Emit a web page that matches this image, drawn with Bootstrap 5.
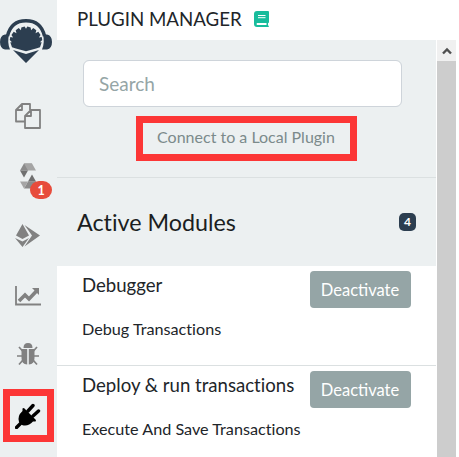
<!DOCTYPE html>
<html lang="en">
<head>
<meta charset="utf-8">
<meta name="viewport" content="width=device-width, initial-scale=1">
<title>Plugin Manager</title>
<link href="https://cdn.jsdelivr.net/npm/bootstrap@5.3.0/dist/css/bootstrap.min.css" rel="stylesheet">
<style>
body{font-family:Lato,"Open Sans",sans-serif;color:#212529;height:457px;line-height:1.2;font-variant-ligatures:none}
.app{width:459px;height:457px}
.icon-bar{width:57px;background:#ecf0f1;color:#818181}
.brand{height:86px;padding-top:19px;color:#2c3e50}
.slot{width:55px;height:60px}
.slot svg{display:block}
.hl{border:7px solid #fc3636}
.slot .hl{width:51px;height:53px;margin:0 0 1px 3px;padding-right:1px;color:#000}
.count{left:30px;top:35px;width:22px;height:18px;border-radius:9px;background:#e74c3c;font-size:12.5px;line-height:19px}
.title-bar{height:40px;padding:0 0 2px 20px}
.title-bar h1{font-size:18.7px}
.search-area{height:138px;padding:20px 34px 0 26px;border-bottom:1px solid #dbe0e1}
.pane{background:#ecf0f1;width:379px}
.search-area .form-control{height:47px;font-size:19px;border-color:#ced4da;border-radius:6px;padding:0 15px 1px}
.search-area .form-control::placeholder{color:#95a5a6}
.link-box{width:221px;height:45px;margin:9px 0 0 53px;padding:0 1px 4px 0;color:#7b8a8b;font-size:16px}
.section-head{height:88px;padding:0 20px}
.section-head h2{font-size:23.3px;color:#1b1e21;padding-top:2px}
.total{width:17px;height:18px;border-radius:5px;background:#2c3e50;font-size:12px;line-height:18px}
.module{height:100px;padding:5px 25px 0;background:#fff;border-bottom:1px solid #dbe0e1}
.module h3{font-size:18.6px;margin-top:3px;line-height:23px}
.module p{font-size:16.2px;line-height:20px;margin-top:11px}
.btn-off{background:#95a5a6;color:#fff;width:101px;height:37px;border-radius:4px;font-size:16.5px;padding:2px 1px 0 0}
.scroller{width:19px;margin-left:1px;background:#cdcdcd}
.scroll-up{height:21px;background:#f0f0f0;color:#505050}
</style>
<script defer src="https://cdn.jsdelivr.net/npm/bootstrap@5.3.0/dist/js/bootstrap.bundle.min.js"></script>
</head>
<body class="bg-white overflow-hidden">
<div class="app d-flex overflow-hidden">
  <nav class="icon-bar flex-shrink-0 d-flex flex-column">
    <div class="brand flex-shrink-0">
      <svg class="d-block" width="52" height="44" viewBox="0 0 52 44"><path d="M7.500 17C10 6 17 1.700 26 1.700S42 6 44.500 17" fill="none" stroke="currentColor" stroke-width="3.400"/><path d="M9 15.500H5q-5 1-5 7.500t5 7.500h5q-3-7-1-15zM43 15.500h4q5 1 5 7.500t-5 7.500h-5q3-7 1-15z" fill="currentColor"/><path d="M13 31l13 4 13-4-13 13z" fill="currentColor"/><path transform="translate(26 19) scale(1.12 1.04) translate(-26 -19)" d="M13.500 28l-1.500-5h1.500l-2-2 .5-3 2.500.5-1.500-2.500 2-3 2.500 1.500-.7-3 2.700-2 2 2 .3-2.500 3-1 1.200 2 1.200-2 3 1 .3 2.500 2-2 2.700 2-.7 3 2.500-1.500 2 3-1.500 2.500 2.500-.5.500 3-2 2H40l-1.500 5-3.500 1.200-9 2.500-9-2.500z" fill="currentColor"/></svg>
    </div>
    <div class="slot d-flex justify-content-center align-items-center flex-shrink-0">
      <svg width="26" height="26" viewBox="0 0 26 26" fill="none" stroke="currentColor" stroke-width="1.800" stroke-linejoin="round"><path d="M9.500 18.500H1V7L7 1h8v6M7 1v6H1M16 7h9v18H10V13l6-6zM16 7v6h-6"/></svg>
    </div>
    <div class="slot position-relative d-flex justify-content-center align-items-center flex-shrink-0">
      <svg width="16" height="26" viewBox="0 0 16 26"><path d="M4 .5h8L8 7.500H0z" fill="#8b8b8b"/><path d="M4 .5h8l4 7H8z" fill="#a5a5a5"/><path d="M0 7.500h8l-4 7z" fill="#707070"/><path d="M12 25.500H4l4-7h8z" fill="#8b8b8b"/><path d="M4 25.500l-4-7h8z" fill="#a5a5a5"/><path d="M16 18.500H8l4-7z" fill="#707070"/></svg>
      <span class="count position-absolute text-white text-center fw-bold">1</span>
    </div>
    <div class="slot d-flex justify-content-center align-items-center flex-shrink-0">
      <svg width="26" height="24" viewBox="0 0 26 24" fill="currentColor"><path d="M7.500 0L14 11.500 7.500 15 1 11.500zM0 14l7.500 3.500L14 14 7.500 23z"/><path d="M9.500 1L25 11.500 9.500 22.500l7.500-11z"/></svg>
    </div>
    <div class="slot d-flex justify-content-center align-items-center flex-shrink-0">
      <svg width="26" height="20" viewBox="0 0 26 20" fill="none" stroke="currentColor"><path d="M1 0v18.500h25" stroke-width="1.800"/><path d="M4 15l6-6 4 4 7.500-8" stroke-width="3.600"/><path d="M17 2h7v7z" fill="currentColor" stroke="none"/></svg>
    </div>
    <div class="slot d-flex justify-content-center align-items-center flex-shrink-0">
      <svg class="mb-1" width="24" height="24" viewBox="0 0 24 24" fill="currentColor"><path d="M7.500 6q0-5 4.500-5t4.500 5zM5.500 7h5.700v15.500Q5.500 22 5.500 16zM18.500 7h-5.700v15.500q5.700-.5 5.700-6.500z"/><path d="M7 9.500L3 5M6 14H1M7 18l-4 4.500M17 9.500L21 5M18 14h5M17 18l4 4.500" fill="none" stroke="currentColor" stroke-width="1.700"/></svg>
    </div>
    <div class="slot d-flex align-items-center flex-shrink-0">
      <div class="hl d-flex justify-content-center align-items-center">
        <svg width="26" height="26" viewBox="0 0 26 26"><path d="M1.500 24.500L7 19M13 8l5-5.500M18 13l5.500-5" fill="none" stroke="currentColor" stroke-width="3.400" stroke-linecap="round"/><path d="M7.500 5.500q1-1 2 0l11 11q1 1 0 2h-2.500q-5 5.500-11 3.500l-3-3q-2-6 3.500-11z" fill="currentColor"/></svg>
      </div>
    </div>
  </nav>
  <main class="d-flex flex-column flex-shrink-0">
    <header class="title-bar d-flex align-items-center flex-shrink-0">
      <h1 class="mb-0 me-2 fw-normal">PLUGIN MANAGER</h1>
      <svg class="ms-1" width="15" height="16" viewBox="0 0 15 16"><path d="M3 0h11q1 0 1 1v10q0 1-1 1.200v2.300q1 0 1 .7 0 .8-1 .8H3q-3 0-3-3V3q0-3 3-3z" fill="#18bc9c"/><path d="M4 4.500h7.500M4 6.700h7.500" stroke="#fff"/><path d="M3 12h9.500v2H3q-1-1 0-2z" fill="#fff"/></svg>
    </header>
    <div class="d-flex flex-grow-1">
      <section class="pane flex-shrink-0">
        <div class="search-area">
          <input class="form-control" type="text" placeholder="Search">
          <div class="link-box hl d-flex justify-content-center align-items-center text-nowrap"><span>Connect to a Local Plugin</span></div>
        </div>
        <div class="section-head d-flex align-items-center justify-content-between">
          <h2 class="mb-0 fw-normal">Active Modules</h2>
          <span class="total text-white text-center fw-bold">4</span>
        </div>
        <article class="module">
          <div class="d-flex justify-content-between"><h3 class="mb-0 fw-normal text-nowrap">Debugger</h3><button class="btn btn-off">Deactivate</button></div>
          <p class="mb-0">Debug Transactions</p>
        </article>
        <article class="module">
          <div class="d-flex justify-content-between"><h3 class="mb-0 fw-normal text-nowrap">Deploy &amp; run transactions</h3><button class="btn btn-off">Deactivate</button></div>
          <p class="mb-0">Execute And Save Transactions</p>
        </article>
      </section>
      <div class="scroller flex-shrink-0">
        <div class="scroll-up d-flex justify-content-center align-items-center"><svg width="10" height="8" viewBox="0 0 10 8"><path d="M1 6.500l4-4 4 4" fill="none" stroke="currentColor" stroke-width="2.400"/></svg></div>
      </div>
    </div>
  </main>
</div>
</body>
</html>
